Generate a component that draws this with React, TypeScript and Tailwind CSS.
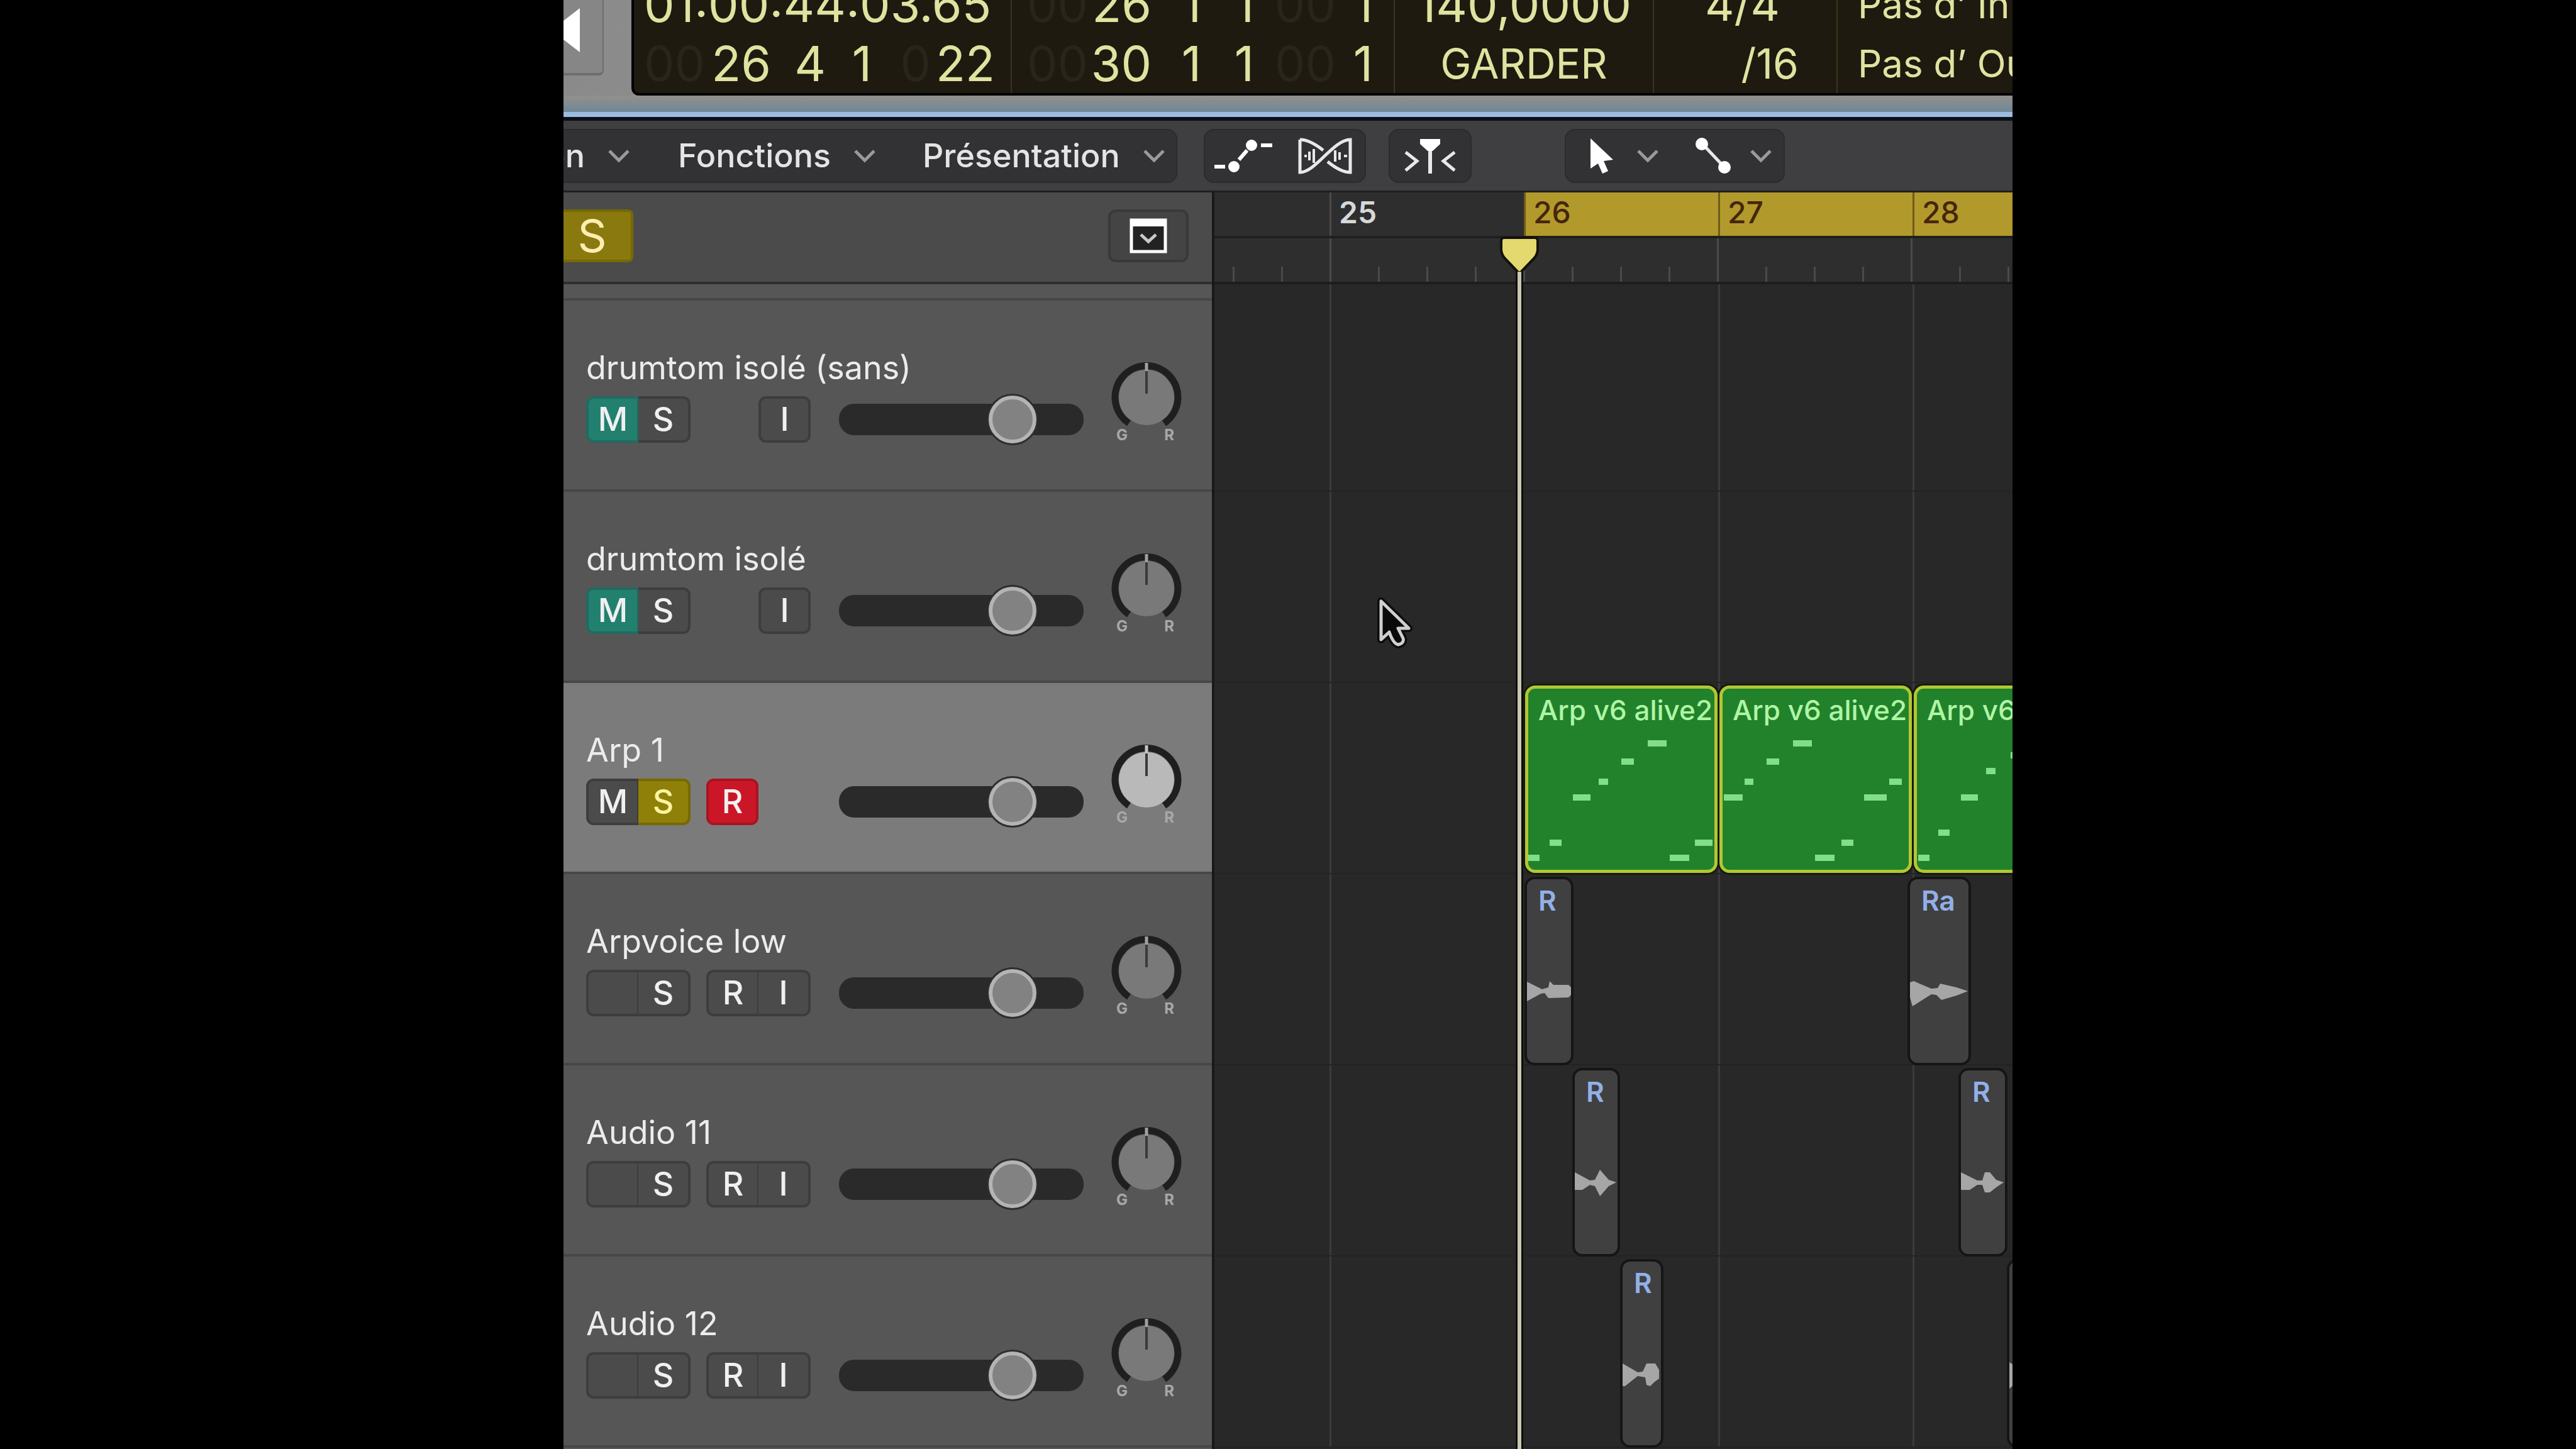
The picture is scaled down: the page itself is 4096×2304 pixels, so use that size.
import { useState } from "react";
import { clsx } from "clsx";

interface Track {
  name: string;
  mute: "on" | "off" | "blank";
  solo?: boolean;
  record?: "on" | "off";
  input?: boolean;
  selected?: boolean;
}

interface Region {
  track: number;
  left: number;
  width: number;
  label: string;
  wave: string;
}

const tracks: Track[] = [
  { name: "drumtom isolé (sans)", mute: "on", input: true },
  { name: "drumtom isolé", mute: "on", input: true },
  { name: "Arp 1", mute: "off", solo: true, record: "on", selected: true },
  { name: "Arpvoice low", mute: "blank", record: "off", input: true },
  { name: "Audio 11", mute: "blank", record: "off", input: true },
  { name: "Audio 12", mute: "blank", record: "off", input: true },
];

const bars = [25, 26, 27, 28];

// x, y, width of every note inside its region
const midiRegions = [
  {
    left: 494,
    notes: [[0, 268, 18], [34, 244, 19], [71, 172, 28], [112, 147, 15], [148, 115, 20], [190, 86, 30], [225, 268, 31], [265, 244, 28]],
  },
  {
    left: 803,
    notes: [[2, 172, 30], [35, 147, 14], [70, 115, 20], [112, 86, 30], [147, 268, 31], [189, 244, 19], [225, 172, 36], [265, 147, 20]],
  },
  {
    left: 1112,
    notes: [[2, 268, 18], [34, 228, 18], [70, 172, 27], [110, 130, 15], [149, 105, 20]],
  },
];

const audioRegions: Region[] = [
  { track: 3, left: 493, width: 78, label: "R", wave: "M0 5 L24 17 L34 14 L36 4 L42 10 L66 10 L70 14 V26 L66 30 L34 31 L28 23 L22 24 L0 36 Z" },
  { track: 3, left: 1102, width: 101, label: "Ra", wave: "M0 6 L6 4 L34 16 L44 15 L48 8 L74 14 L92 20 L74 27 L50 34 L42 26 L34 25 L4 44 L0 30 Z" },
  { track: 4, left: 569, width: 76, label: "R", wave: "M0 4 L24 17 L32 16 L40 0 L54 16 L66 20 L54 26 L40 42 L32 26 L24 24 L12 32 L0 32 Z" },
  { track: 4, left: 1183, width: 78, label: "R", wave: "M0 4 L26 17 L34 17 L38 4 L46 4 L56 16 L68 20 L56 28 L46 36 L38 36 L34 24 L26 24 L14 32 L0 32 Z" },
  { track: 5, left: 645, width: 69, label: "R", wave: "M0 4 L24 18 L32 17 L38 4 H52 L58 14 V28 L50 34 L44 40 L38 38 L36 26 L24 24 L4 40 L0 40 Z" },
  { track: 5, left: 1260, width: 76, label: "R", wave: "M0 2 L24 18 V24 L0 44 Z" },
];

function Chevron() {
  return (
    <svg viewBox="0 0 36 22" className="h-[22px] w-9 shrink-0" fill="none" stroke="#9a9a9a" strokeWidth="5">
      <path d="M3 3 L18 18 L33 3" />
    </svg>
  );
}

function Ghost({ children }: { children: string }) {
  return <span className="text-[#28251b]">{children}</span>;
}

function Transport() {
  const cell = "flex shrink-0 flex-col justify-end border-r-2 border-[#38351f] leading-[94px]";
  return (
    <header className="flex h-[152px] shrink-0 items-end overflow-hidden bg-linear-to-r from-[#8a8a8a] to-[#b0b0b0]">
      <button
        aria-label="Retour"
        className="mb-8 flex h-[140px] w-16 shrink-0 items-center rounded-br-lg border-r-2 border-b-4 border-[#6e6e6e] bg-[#868686]"
      >
        <svg viewBox="0 0 26 70" className="h-[70px] w-[26px]" fill="#fff">
          <path d="M26 0 V70 L0 50 V20 Z" />
        </svg>
      </button>
      <div className="ml-11 flex h-[200px] min-w-0 flex-1 overflow-hidden rounded-bl-xl border-b-4 border-l-4 border-black bg-[#1e1a10] text-[77px] whitespace-nowrap text-[#e0e3a0]">
        <div className={clsx(cell, "w-[601px] pl-4")}>
          <div>01:00:44:03.65</div>
          <div className="grid grid-cols-[92px_110px_87px_73px_94px_102px] text-right">
            <Ghost>00</Ghost>
            <span>26</span>
            <span>4</span>
            <span>1</span>
            <Ghost>0</Ghost>
            <span>22</span>
          </div>
        </div>
        <div className={clsx(cell, "w-[609px] pl-6")}>
          {["26", "30"].map((bar) => (
            <div key={bar} className="grid grid-cols-[94px_104px_79px_84px_130px_59px] text-right">
              <Ghost>00</Ghost>
              <span>{bar}</span>
              <span>1</span>
              <span>1</span>
              <Ghost>00</Ghost>
              <span>1</span>
            </div>
          ))}
        </div>
        <div className={clsx(cell, "w-[412px] items-center")}>
          <div>140,0000</div>
          <div className="text-[66px]">GARDER</div>
        </div>
        <div className={clsx(cell, "w-[292px]")}>
          <div className="pr-[90px] text-right text-7xl leading-[94px]">4/4</div>
          <div className="pr-[60px] text-right text-[66px]">/16</div>
        </div>
        <div className="flex flex-col justify-end pl-8 text-[60px] leading-[94px]">
          <div>Pas d’ In</div>
          <div>Pas d’ Out</div>
        </div>
      </div>
    </header>
  );
}

function Toolbar() {
  const group = "flex h-[86px] shrink-0 items-center border-2 border-[#2b2b2c] bg-[#323234]";
  return (
    <nav className="flex h-[120px] shrink-0 items-center overflow-hidden border-t-6 border-b-[3px] border-t-[#0b0f18] border-b-[#1f1f1f] bg-[#3f3f41] text-[52px] font-medium text-[#e4e4e4]">
      <div className={clsx(group, "w-[976px] rounded-r-2xl border-l-0")}>
        <button className="flex w-[150px] items-center justify-end gap-9 pr-11">
          on <Chevron />
        </button>
        <button className="flex items-center gap-9 pl-8">
          Fonctions <Chevron />
        </button>
        <button className="flex items-center gap-9 pl-[74px]">
          Présentation <Chevron />
        </button>
      </div>
      <div className={clsx(group, "ml-[42px] w-[258px] gap-9 rounded-2xl pl-[14px]")}>
        <button aria-label="Automation">
          <svg viewBox="0 0 96 60" className="h-[60px] w-24" stroke="#fff" strokeWidth="6" fill="#fff">
            <path d="M1 47 H18 M40 36 L53 21 M75 13 H93" />
            <circle cx="32" cy="47" r="7" strokeWidth="4" />
            <circle cx="60" cy="13" r="7" strokeWidth="4" />
          </svg>
        </button>
        <button aria-label="Flex">
          <svg viewBox="0 0 90 60" className="h-[60px] w-[90px]" stroke="#e8e8e8" strokeWidth="5" fill="none">
            <path d="M5 4 V56 C30 56 58 4 85 4 V56 C72 56 60 48 49 39 M5 4 C18 4 32 13 42 21" />
            <path d="M12 30 H16 M20 23 V37 M27 19 V41 M61 21 V39 M68 24 V36 M75 30 H80" strokeWidth="4" />
          </svg>
        </button>
      </div>
      <button aria-label="Catch" className={clsx(group, "ml-9 w-[132px] justify-center rounded-2xl")}>
        <svg viewBox="0 0 84 60" className="h-[60px] w-21" fill="none" stroke="#e8e8e8" strokeWidth="6">
          <path d="M3 24 L21 38 L3 53 M81 24 L63 38 L81 53" strokeWidth="5" />
          <path d="M42 14 V58" />
          <path d="M26 3 H58 V11 L46 22 H38 L26 11 Z" fill="#fff" stroke="none" />
        </svg>
      </button>
      <div className={clsx(group, "ml-[148px] w-[350px] rounded-2xl pl-[38px]")}>
        <button aria-label="Pointeur" className="flex items-center gap-9">
          <svg viewBox="0 0 38 58" className="h-[58px] w-[38px]" fill="#fff">
            <path d="M1 1 L37 35 L22 37 L29 53 L20 57 L13 41 L1 49 Z" />
          </svg>
          <Chevron />
        </button>
        <button aria-label="Ligne" className="ml-14 flex items-center gap-7">
          <svg viewBox="0 0 60 60" className="size-15" fill="#fff" stroke="#e8e8e8" strokeWidth="5">
            <path d="M14 12 L48 48" />
            <circle cx="12" cy="11" r="10" stroke="none" />
            <circle cx="48" cy="48" r="10" stroke="none" />
          </svg>
          <Chevron />
        </button>
      </div>
    </nav>
  );
}

function PanKnob({ bright }: { bright?: boolean }) {
  return (
    <div className="mt-[98px] w-28 shrink-0" role="img" aria-label="Panoramique">
      <svg viewBox="0 0 112 104" className="h-[104px] w-28" fill="none">
        <circle cx="56" cy="56" r="44" fill={bright ? "#b9b9b9" : "#797979"} />
        <path d="M28 97 A50 50 0 1 1 84 97" stroke="#1f1f1f" strokeWidth="11" />
        <path d="M56 1 V14" stroke={bright ? "#c4c4c4" : "#a0a0a0"} strokeWidth="5" />
        <path d="M56 14 V50" stroke="#3a3a3a" strokeWidth="4" />
      </svg>
      <div className="flex justify-between pr-3 pl-2 text-2xl leading-6 font-bold text-[#a8a8a8]">
        <span>G</span>
        <span>R</span>
      </div>
    </div>
  );
}

function TrackHeader({ track }: { track: Track }) {
  const [volume, setVolume] = useState(76);
  const button = "flex h-[74px] w-[83px] items-center justify-center border-4 border-[#3d3d3d] bg-[#4b4b4b]";
  return (
    <li
      className={clsx(
        "flex h-[304px] border-b-4 border-[#474747] pl-9",
        track.selected ? "bg-[#7b7b7b]" : "bg-[#565656]"
      )}
    >
      <div className="mr-11 pt-[72px]">
        <h2 className="text-[52px] leading-[70px] whitespace-nowrap text-[#ececec]">{track.name}</h2>
        <div className="mt-[9px] flex items-center text-[52px] leading-none font-medium text-[#f0f0f0]">
          <div className="flex w-[191px]">
            <button
              aria-label="Muet"
              className={clsx(button, "rounded-l-xl border-r-2", track.mute === "on" && "border-[#226a60]! bg-[#22806f]!")}
            >
              {track.mute !== "blank" && "M"}
            </button>
            <button
              aria-label="Solo"
              className={clsx(button, "rounded-r-xl border-l-0", track.solo && "border-[#756900]! bg-[#8f8009]! text-[#fbf3a0]")}
            >
              S
            </button>
          </div>
          <div className="flex w-[211px]">
            {track.record ? (
              <button
                aria-label="Enregistrement"
                className={clsx(
                  button,
                  track.record === "on" ? "rounded-xl border-[#a8141f]! bg-[#cb1628]!" : "rounded-l-xl border-r-2"
                )}
              >
                R
              </button>
            ) : (
              <span className="w-[83px]" />
            )}
            {track.input && (
              <button aria-label="Entrée" className={clsx(button, track.record ? "rounded-r-xl border-l-0" : "rounded-xl")}>
                I
              </button>
            )}
          </div>
          <input
            type="range"
            aria-label={`Volume ${track.name}`}
            value={volume}
            onChange={(e) => setVolume(Number(e.target.value))}
            className="h-[76px] w-[389px] appearance-none bg-transparent [&::-webkit-slider-runnable-track]:h-[50px] [&::-webkit-slider-runnable-track]:rounded-3xl [&::-webkit-slider-runnable-track]:bg-[#2a2a2a] [&::-webkit-slider-thumb]:-mt-[13px] [&::-webkit-slider-thumb]:size-[76px] [&::-webkit-slider-thumb]:appearance-none [&::-webkit-slider-thumb]:rounded-full [&::-webkit-slider-thumb]:border-6 [&::-webkit-slider-thumb]:border-[#b4b4b4] [&::-webkit-slider-thumb]:bg-[#828282] [&::-webkit-slider-thumb]:shadow-[0_0_0_3px_#2e2e2e]"
          />
        </div>
      </div>
      <PanKnob bright={track.selected} />
    </li>
  );
}

function TrackList() {
  return (
    <aside className="w-[1035px] shrink-0 border-r-4 border-[#191919] bg-[#565656]">
      <div className="flex h-[146px] items-center justify-between border-b-4 border-[#2f2f2f] bg-[#4b4b4b] pr-[37px] pb-1">
        <button
          aria-label="Solo global"
          className="h-[84px] w-[111px] rounded-r-lg border-y-4 border-r-4 border-[#756900] bg-[#89790f] pr-4 text-7xl leading-none text-[#fdeeb0]"
        >
          S
        </button>
        <button
          aria-label="Configuration des pistes"
          className="flex h-[84px] w-32 items-center justify-center rounded-xl border-4 border-[#393939] bg-[#444]"
        >
          <svg viewBox="0 0 60 56" className="h-14 w-15" fill="none" stroke="#fff">
            <rect x="3" y="3" width="54" height="50" strokeWidth="5" fill="#222" />
            <path d="M3 7 H57" strokeWidth="12" />
            <path d="M18 26 L30 37 L42 26" stroke="#c8c8c8" strokeWidth="5" />
          </svg>
        </button>
      </div>
      <div className="h-[26px] border-b-4 border-[#474747]" />
      <ul>
        {tracks.map((track) => (
          <TrackHeader key={track.name} track={track} />
        ))}
      </ul>
    </aside>
  );
}

function Ruler() {
  return (
    <div className="relative h-[146px] border-b-4 border-[#1d1d1d] bg-[#2e2e2f]">
      <div className="flex h-[73px] overflow-hidden border-b-4 border-[#202020] pl-[183px] text-5xl font-semibold">
        {bars.map((bar) => (
          <div
            key={bar}
            className={clsx(
              "w-[309px] shrink-0 border-l-3 pt-1 pl-3 leading-[56px]",
              bar === 25 ? "border-[#4a4a4a] text-[#d8d8d8]" : "border-[#6d5a1a] bg-[#b2992c] font-medium text-[#45260a]"
            )}
          >
            {bar}
          </div>
        ))}
      </div>
      <div className="flex h-[69px] items-end overflow-hidden pl-[29px]">
        {Array.from({ length: 17 }, (_, i) => (
          <span
            key={i}
            className={clsx("w-[77px] shrink-0 border-l-3 border-[#4a4a4a]", i % 4 === 2 && i !== 6 ? "h-full" : "h-6")}
          />
        ))}
      </div>
    </div>
  );
}

function Arrangement() {
  return (
    <main className="relative min-w-0 flex-1 overflow-hidden bg-[#282828]">
      <Ruler />
      <div className="relative pt-[26px]">
        {/* bar lines */}
        <div className="absolute inset-y-0 left-[183px] w-[3px] bg-[#3b3b3b]" />
        <div className="absolute inset-y-0 left-[801px] w-[3px] bg-[#3b3b3b]" />
        <div className="absolute inset-y-0 left-[1110px] w-[3px] bg-[#3b3b3b]" />
        {tracks.map((track, row) => (
          <div key={track.name} className="relative h-[304px] border-b-2 border-[#232323]">
            {row === 2 &&
              midiRegions.map((region) => (
                <div
                  key={region.left}
                  style={{ left: region.left }}
                  className="absolute top-1 h-[298px] w-[306px] overflow-hidden rounded-2xl border-5 border-[#b3c634] bg-[#21822b] shadow-[0_0_0_3px_#151a10]"
                >
                  <div className="pt-1 pl-4 text-[44px] leading-[60px] font-medium whitespace-nowrap text-[#b0f5a6]">
                    Arp v6 alive2
                  </div>
                  {region.notes.map(([x, y, w]) => (
                    <span
                      key={x}
                      style={{ left: x, top: y - 4, width: w }}
                      className="absolute h-[10px] bg-[#82de88]"
                    />
                  ))}
                </div>
              ))}
            {audioRegions
              .filter((region) => region.track === row)
              .map((region) => (
                <div
                  key={region.left}
                  style={{ left: region.left, width: region.width }}
                  className="absolute top-1 h-[300px] overflow-hidden rounded-2xl border-4 border-[#151515] bg-[#404040]"
                >
                  <div className="pt-1 pl-[18px] text-[44px] leading-[60px] font-semibold text-[#92b0e8]">{region.label}</div>
                  <svg viewBox="0 0 92 44" className="mt-[94px] h-11 w-[92px] max-w-none" fill="#a6a6a6">
                    <path d={region.wave} />
                  </svg>
                </div>
              ))}
          </div>
        ))}
      </div>
      {/* playhead */}
      <div className="absolute top-[70px] bottom-0 left-[453px] flex w-16 flex-col items-center">
        <svg viewBox="0 0 64 60" className="h-15 w-16 shrink-0" fill="#e4d96e" stroke="#14120a" strokeWidth="4">
          <path d="M7 2 H57 Q61 2 61 8 V22 Q60 30 54 36 L34 57 H30 L10 36 Q4 30 3 22 V8 Q3 2 7 2 Z" />
        </svg>
        <div className="-mt-1 w-3 flex-1 border-x-3 border-[#0e0d08] bg-[#c9c7b2]" />
      </div>
      {/* mouse cursor */}
      <svg viewBox="0 0 60 84" className="absolute top-[641px] left-[258px] h-21 w-15" fill="#0a0a0a" strokeLinejoin="round">
        <path d="M7 9 V70 L20 58 Q26 76 34 78 Q44 76 42 68 L34 52 H51 Z" stroke="#0c0c0c" strokeWidth="12" />
        <path d="M7 9 V70 L20 58 Q26 76 34 78 Q44 76 42 68 L34 52 H51 Z" stroke="#cfcfcf" strokeWidth="5" />
      </svg>
    </main>
  );
}

export default function App() {
  return (
    <div className="flex h-screen justify-center bg-black font-[Inter,sans-serif]">
      <div className="flex h-full w-[56.25%] flex-col overflow-hidden">
        <Transport />
        <div className="h-[34px] shrink-0 border-b-8 border-[#9dbbe0] bg-linear-to-b from-[#93908a] to-[#6f8798]" />
        <Toolbar />
        <div className="flex min-h-0 flex-1 overflow-hidden">
          <TrackList />
          <Arrangement />
        </div>
      </div>
    </div>
  );
}
